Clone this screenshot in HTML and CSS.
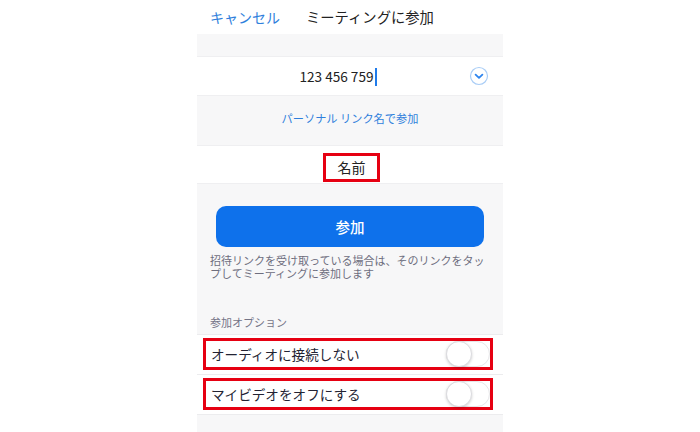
FILE: index.html
```html
<!DOCTYPE html>
<html lang="ja">

<head>
	<meta charset="UTF-8">
	<title>ミーティングに参加</title>
	<link rel="stylesheet" href="styles.css">
</head>

<body>
	<div class="screen">
		<header class="nav">
			<span class="cancel">キャンセル</span>
			<span class="title">ミーティングに参加</span>
		</header>
		<div class="gap"></div>
		<div class="row-num">
			<span class="num">123 456 759<i class="caret"></i></span>
			<svg class="drop" width="20" height="20" viewBox="0 0 20 20">
				<circle cx="10" cy="10" r="8.5" fill="none" stroke="#a9cdf6" stroke-width="1.2" />
				<path d="M6.6 8.6 L10 11.8 L13.4 8.6" fill="none" stroke="#2d84ee" stroke-width="1.8" stroke-linecap="round" stroke-linejoin="round" />
			</svg>
		</div>
		<div class="personal">パーソナル リンク名で参加</div>
		<div class="row-name">
			<span class="name-box">名前</span>
		</div>
		<section class="join">
			<button class="join-btn">参加</button>
			<p class="desc">招待リンクを受け取っている場合は、そのリンクをタップしてミーティングに参加します</p>
		</section>
		<div class="opt-label">参加オプション</div>
		<div class="opts">
			<div class="opt">
				<div class="hl">
					<span>オーディオに接続しない</span>
					<span class="toggle"><i class="knob"></i></span>
				</div>
			</div>
			<div class="opt">
				<div class="hl">
					<span>マイビデオをオフにする</span>
					<span class="toggle"><i class="knob"></i></span>
				</div>
			</div>
		</div>
	</div>
</body>

</html>
```

FILE: styles.css
```css
body {
	margin: 0;
	background-color: #fff;
	color: #232333;
	font-family: "Noto Sans CJK JP", "Noto Sans", sans-serif;
}

.screen {
	width: 306px;
	height: 432px;
	margin: 0 auto;
	background-color: #f7f7f8;
	overflow: hidden;
}

.nav {
	height: 34px;
	display: flex;
	align-items: center;
	padding-left: 13px;
	background-color: #fff;
	font-size: 14px;
	line-height: 16px;
}

.cancel {
	color: #2f7fdc;
}

.title {
	margin-left: 26px;
	font-size: 14.3px;
	color: #222;
}

.gap {
	height: 22px;
}

.row-num {
	height: 40px;
	display: flex;
	align-items: center;
	background-color: #fff;
	border-top: 1px solid #efeff1;
	border-bottom: 1px solid #efeff1;
	box-sizing: border-box;
}

.num {
	flex: 1;
	padding-left: 10px;
	text-align: center;
	font-size: 13.6px;
	line-height: 18px;
	color: #222;
}

.caret {
	display: inline-block;
	width: 2px;
	height: 18px;
	margin-left: 1px;
	vertical-align: -4px;
	background-color: #1f7bea;
}

.drop {
	margin-right: 14px;
}

.personal {
	height: 49px;
	box-sizing: border-box;
	padding-top: 15px;
	text-align: center;
	font-size: 11.2px;
	line-height: 14px;
	color: #2f7fdc;
}

.row-name {
	height: 39px;
	box-sizing: border-box;
	padding-top: 7px;
	text-align: center;
	background-color: #fff;
	border-top: 1px solid #efeff1;
	border-bottom: 1px solid #efeff1;
}

.name-box {
	display: inline-block;
	box-sizing: border-box;
	width: 57px;
	height: 29px;
	border: 3px solid #e60012;
	font-size: 14px;
	line-height: 23px;
	color: #222;
	margin-left: 3px;
}

.join {
	padding: 22px 0 0;
}

.join-btn {
	display: block;
	width: 268px;
	height: 41px;
	margin: 0 19px;
	border: 0;
	border-radius: 10px;
	background-color: #0e71eb;
	color: #fff;
	font-family: inherit;
	font-size: 14.5px;
	font-weight: 500;
}

.desc {
	width: 280px;
	margin: 7px 0 0 13px;
	font-size: 11px;
	line-height: 13px;
	color: #6e6e7e;
}

.opt-label {
	margin: 35px 0 0 13px;
	font-size: 11px;
	line-height: 14px;
	color: #747487;
}

.opts {
	margin-top: 5px;
	background-color: #fff;
	border-bottom: 1px solid #ececee;
}

.opt {
	height: 40px;
	box-sizing: border-box;
	padding: 3px 10px 4px 6px;
	border-top: 1px solid #ececee;
}

.hl {
	height: 100%;
	box-sizing: border-box;
	display: flex;
	align-items: center;
	justify-content: space-between;
	padding-left: 5px;
	border: 3px solid #e60012;
	font-size: 13.6px;
	color: #232333;
}

.toggle {
	position: relative;
	width: 44px;
	height: 26px;
	box-sizing: border-box;
	border: 1px solid #e6e6e8;
	border-radius: 13px;
	background-color: #fff;
}

.knob {
	position: absolute;
	left: -1px;
	top: -1px;
	width: 26px;
	height: 26px;
	box-sizing: border-box;
	border-radius: 50%;
	border: 1px solid #dcdce0;
	background-color: #fff;
	box-shadow: 0 1px 3px rgba(0, 0, 0, 0.18);
}
```
